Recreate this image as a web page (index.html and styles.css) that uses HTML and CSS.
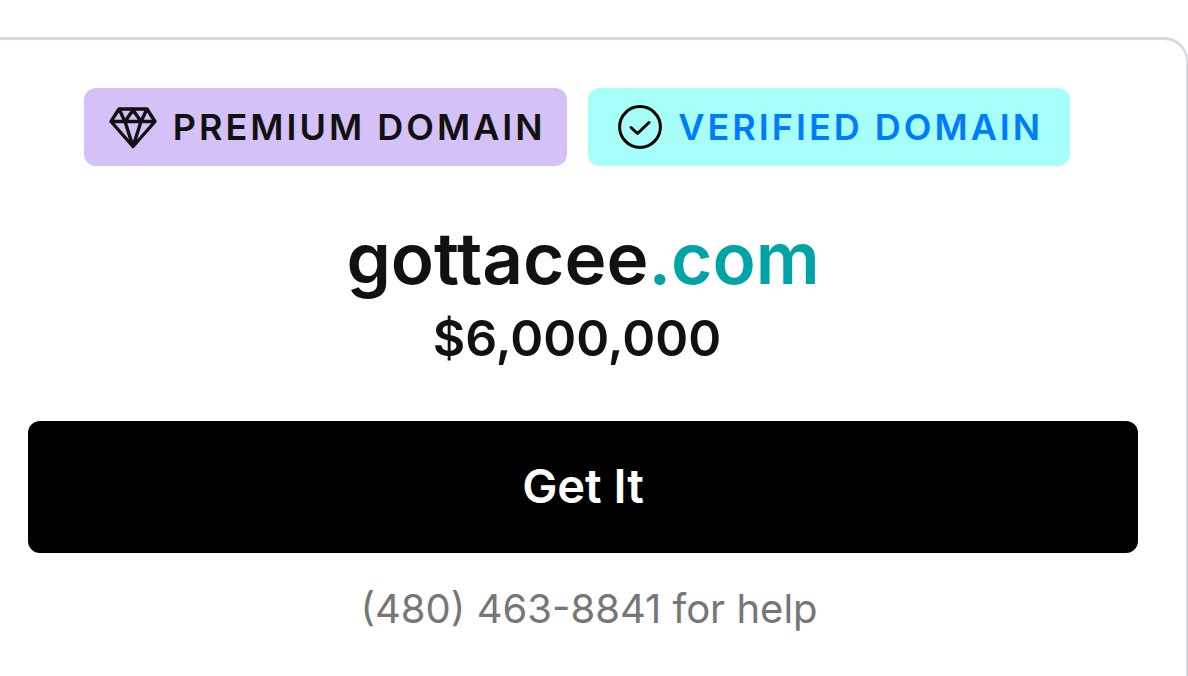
FILE: index.html
```
<!DOCTYPE html>
<html lang="en">
<head>
<meta charset="utf-8">
<meta name="viewport" content="width=device-width, initial-scale=1">
<title>gottacee.com</title>
<link rel="stylesheet" href="styles.css">
</head>
<body>
<main class="card">
  <div class="badges">
    <span class="badge badge-premium">
      <svg class="icon-gem" viewBox="0 -2 48 44" fill="none" stroke="currentColor" stroke-width="3.4" stroke-linejoin="round" stroke-linecap="round" aria-hidden="true">
        <path d="M10 2H38L46 14.500L24 39.500L2 14.500ZM2 14.500H46M10 2L16 14.500L24 3L32 14.500L38 2M16 14.500L24 39.500L32 14.500"/>
      </svg>
      <span>PREMIUM DOMAIN</span>
    </span>
    <span class="badge badge-verified">
      <svg class="icon-check" viewBox="0 0 44 44" fill="none" stroke="currentColor" stroke-width="3" stroke-linejoin="round" stroke-linecap="round" aria-hidden="true">
        <circle cx="22" cy="22" r="20.400"/>
        <path d="M13 22.500L19.500 28.500L31 17.500"/>
      </svg>
      <span>VERIFIED DOMAIN</span>
    </span>
  </div>
  <h1 class="domain">gottacee<span class="tld">.com</span></h1>
  <p class="price">$6,000,000</p>
  <button class="buy" type="button">Get It</button>
  <p class="help">(480) 463-8841 for help</p>
</main>
</body>
</html>
```
FILE: styles.css
```
* {
  box-sizing: border-box;
}

body {
  margin: 0;
  background: #fff;
  color: #111;
  font-family: Inter, "Liberation Sans", sans-serif;
}

.card {
  min-height: calc(100vh - 37px);
  margin-top: 37px;
  padding: 48px 48px 40px 28px;
  border: 3px solid #d0d9dd;
  border-width: 3px 2px 0 0;
  border-top-right-radius: 24px;
  text-align: center;
}

.badges {
  display: flex;
  gap: 21px;
  padding: 0 68px 0 56px;
}

.badge {
  display: flex;
  flex: 1;
  align-items: center;
  justify-content: center;
  gap: 16px;
  height: 78px;
  padding: 0 20px 0 24px;
  border-radius: 12px;
  font-size: 36px;
  font-weight: 600;
  letter-spacing: 3px;
  line-height: 44px;
  white-space: nowrap;
}

.badge-premium {
  background: #d3c1f7;
}

.badge-verified {
  background: #a6fff8;
  color: #007bff;
}

.icon-gem {
  width: 48px;
  height: 44px;
}

.icon-check {
  width: 44px;
  height: 44px;
  color: #000;
}

.domain {
  margin: 48px 0 0;
  font-size: 71px;
  font-weight: 600;
  line-height: 88px;
}

.tld {
  color: #00a4a6;
}

.price {
  margin: 0 12px 0 0;
  font-size: 50px;
  font-weight: 600;
  line-height: 72px;
}

.buy {
  display: block;
  width: 100%;
  height: 132px;
  margin-top: 47px;
  padding: 0 0 4px;
  border: 0;
  border-radius: 12px;
  background: #000;
  color: #fff;
  font: inherit;
  font-size: 47px;
  font-weight: 600;
}

.help {
  margin: 28px 0 0 12px;
  color: #767676;
  font-size: 40px;
  line-height: 56px;
}
```
